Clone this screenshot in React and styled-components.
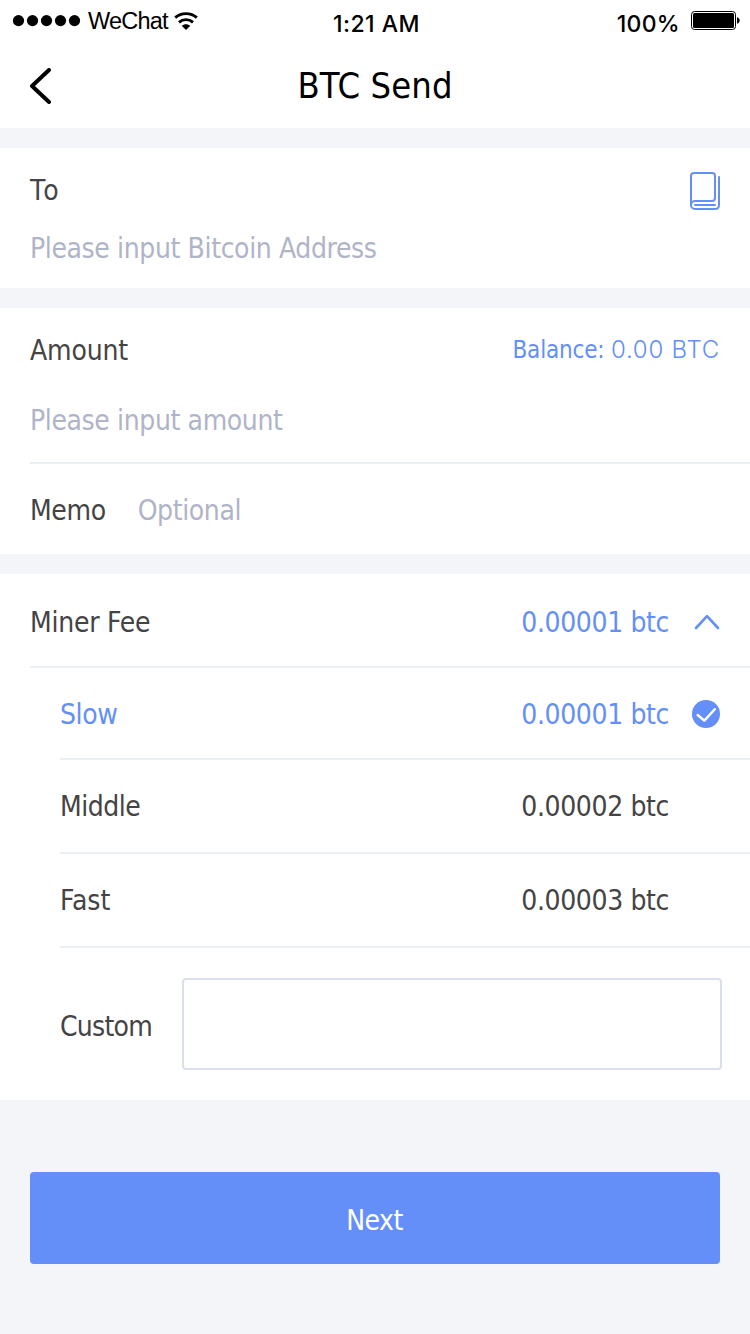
import React from "react";
import styled, { createGlobalStyle } from "styled-components";

const BLUE = "#648ff9";

const GlobalStyle = createGlobalStyle`
  *, *::before, *::after { box-sizing: border-box; }
  body {
    margin: 0;
    background: #f3f5f9;
    color: #444;
    font-family: "DejaVu Sans Condensed", "DejaVu Sans", sans-serif;
    font-stretch: condensed;
    font-size: 28px;
    line-height: 34px;
    letter-spacing: -0.38px;
  }
  svg { display: block; flex: none; }
`;

const Screen = styled.div`
  display: flex;
  flex-direction: column;
  gap: 20px;
  width: 750px;
  height: 1334px;
  overflow: hidden;
`;

const Header = styled.header`
  height: 128px;
  background: #fff;
  color: #000;
`;

const StatusBar = styled.div`
  display: grid;
  grid-template-columns: 1fr auto 1fr;
  height: 40px;
  padding: 0 10px 0 13px;
  font-family: Inter, sans-serif;
  font-size: 23px;
  font-weight: 450;
  line-height: 28px;
`;

const Carrier = styled.div`
  display: flex;
  align-items: center;
  height: 42px;
`;

const CarrierName = styled.span`
  margin: 0 6px 0 7px;
  font-family: "Liberation Sans", sans-serif;
  font-size: 23.5px;
  font-weight: 400;
  letter-spacing: -0.8px;
`;

const Clock = styled.div`
  padding-top: 10px;
  letter-spacing: 0.45px;
`;

const Power = styled.div`
  display: flex;
  justify-content: flex-end;
  gap: 11px;
  padding-top: 10px;
  letter-spacing: 0.3px;
`;

const NavBar = styled.div`
  display: grid;
  grid-template-columns: 60px 1fr 60px;
  align-items: center;
  height: 88px;
  padding: 4px 30px 0;
`;

const Title = styled.h1`
  margin: 0;
  font-size: 36px;
  font-weight: 400;
  line-height: 44px;
  letter-spacing: 0.1px;
  text-align: center;
`;

const Card = styled.section`
  background: #fff;
`;

const AddressCard = styled(Card)`
  height: 140px;
  padding: 24px 29px 0 30px;
`;

const Split = styled.div`
  display: flex;
  justify-content: space-between;
  align-items: flex-start;
`;

const Label = styled.span`
  padding-top: ${(p) => p.$top || 0}px;
  letter-spacing: ${(p) => p.$spacing ?? -0.38}px;
`;

const Placeholder = styled.div`
  margin-top: ${(p) => p.$top || 0}px;
  color: #b0b4c8;
`;

const AmountBlock = styled.div`
  height: 156px;
  margin-left: 30px;
  padding: 26px 30px 0 0;
  border-bottom: 2px solid #ebeff4;
`;

const Balance = styled.div`
  padding-top: 1px;
  color: ${BLUE};
  font-size: 24px;
  line-height: 30px;
  letter-spacing: -0.2px;
  white-space: nowrap;
`;

const BalanceValue = styled.span`
  font-family: Inter, sans-serif;
  font-weight: 300;
  letter-spacing: 0.75px;
`;

const MemoRow = styled.div`
  display: flex;
  align-items: center;
  gap: 32px;
  height: 90px;
  padding: 4px 30px 0;
`;

const FeeRow = styled.div`
  display: flex;
  align-items: center;
  height: ${(p) => p.$height}px;
  margin-left: ${(p) => p.$indent}px;
  padding: ${(p) => p.$top}px 30px 0 0;
  border-bottom: 2px solid #ebeff4;
  color: ${(p) => (p.$active ? BLUE : "#444")};
`;

const FeeValue = styled.span`
  margin-left: auto;
  color: ${(p) => (p.$blue ? BLUE : "inherit")};
`;

const IconSlot = styled.span`
  display: flex;
  justify-content: flex-end;
  width: 51px;
  padding-bottom: 2px;
`;

const CustomRow = styled.div`
  display: grid;
  grid-template-columns: 122px 540px;
  align-items: center;
  height: 152px;
  padding-left: 60px;
`;

const CustomInput = styled.input`
  height: 92px;
  border: 2px solid #dae0e9;
  border-radius: 4px;
  background: #fff;
  outline: none;
`;

const NextButton = styled.button`
  height: 92px;
  margin: 52px 30px 0;
  padding: 6px 1px 0 0;
  border: 0;
  border-radius: 4px;
  background: ${BLUE};
  color: #fff;
  font: inherit;
  letter-spacing: -0.5px;
`;

const Signal = () => (
  <svg width="68" height="12" viewBox="0 0 68 12">
    {[5.5, 19.5, 33.5, 47.5, 61.5].map((x) => (
      <circle key={x} cx={x} cy="5.600" r="5.6" />
    ))}
  </svg>
);

const Wifi = () => (
  <svg width="24" height="18" viewBox="0 0 24 18" fill="none" stroke="#000" strokeWidth="2.9">
    <path d="M1.200 5.700C7.300 .2 16.700 .2 22.800 5.700" />
    <path d="M5 10.300c4-3.600 10-3.600 14 0" />
    <path d="M7.700 13.800c2.500-2.200 6.100-2.200 8.600 0L12 18z" fill="#000" stroke="none" />
  </svg>
);

const Battery = () => (
  <svg width="49" height="20" viewBox="0 0 49 20">
    <rect x=".5" y="1.5" width="44" height="18" rx="3" fill="none" stroke="#000" />
    <rect x="2" y="3" width="41" height="15" rx="1.5" />
    <path d="M46 7.200c3.600 1.200 3.600 5.400 0 6.600z" />
  </svg>
);

const Back = () => (
  <svg width="22" height="36" viewBox="0 0 22 36" fill="none" stroke="#000" strokeWidth="4" strokeLinecap="round" strokeLinejoin="round">
    <path d="M19 2 2 18l17 16" />
  </svg>
);

const Book = () => (
  <svg width="31" height="39" viewBox="0 0 31 39" fill="none" stroke={BLUE} strokeWidth="2" strokeLinecap="round" strokeLinejoin="round">
    <path d="M1 33V4q0-3 3-3h18q3 0 3 3v22q0 3-3 3H5a4 4 0 0 0 0 8h20q4 0 4-4V5" />
    <path d="M5 33h20" />
  </svg>
);

const ChevronUp = () => (
  <svg width="26" height="16" viewBox="0 0 26 16" fill="none" stroke={BLUE} strokeWidth="2.6" strokeLinecap="round" strokeLinejoin="round">
    <path d="M2 14 13 2.2 24 14" />
  </svg>
);

const CheckCircle = () => (
  <svg width="28" height="28" viewBox="0 0 28 28" fill="none">
    <circle cx="14" cy="14" r="14" fill={BLUE} />
    <path d="m5.700 15 6.600 5.600L22.800 9.200" stroke="#fff" strokeWidth="2.4" strokeLinecap="round" strokeLinejoin="round" />
  </svg>
);

const OPTIONS = [
  { name: "Slow", fee: "0.00001 btc", height: 92, top: 3, active: true },
  { name: "Middle", fee: "0.00002 btc", height: 94, top: 1, spacing: -0.5 },
  { name: "Fast", fee: "0.00003 btc", height: 94, top: 1, spacing: 0 },
];

export default function App() {
  return (
    <>
      <GlobalStyle />
      <Screen>
        <Header>
          <StatusBar>
            <Carrier>
              <Signal />
              <CarrierName>WeChat</CarrierName>
              <Wifi />
            </Carrier>
            <Clock>1:21 AM</Clock>
            <Power>
              <span>100%</span>
              <Battery />
            </Power>
          </StatusBar>
          <NavBar>
            <Back />
            <Title>BTC Send</Title>
          </NavBar>
        </Header>
        <AddressCard>
          <Split>
            <Label $top={2} $spacing={2.6}>To</Label>
            <Book />
          </Split>
          <Placeholder $top={21}>Please input Bitcoin Address</Placeholder>
        </AddressCard>
        <Card>
          <AmountBlock>
            <Split>
              <Label $spacing={-0.15}>Amount</Label>
              <Balance>
                Balance: <BalanceValue>0.00 BTC</BalanceValue>
              </Balance>
            </Split>
            <Placeholder $top={36}>Please input amount</Placeholder>
          </AmountBlock>
          <MemoRow>
            <Label>Memo</Label>
            <Placeholder>Optional</Placeholder>
          </MemoRow>
        </Card>
        <Card>
          <FeeRow $height={94} $indent={30} $top={6}>
            <Label $spacing={-0.25}>Miner Fee</Label>
            <FeeValue $blue>0.00001 btc</FeeValue>
            <IconSlot>
              <ChevronUp />
            </IconSlot>
          </FeeRow>
          {OPTIONS.map((o) => (
            <FeeRow key={o.name} $height={o.height} $indent={60} $top={o.top} $active={o.active}>
              <Label $spacing={o.spacing}>{o.name}</Label>
              <FeeValue>{o.fee}</FeeValue>
              <IconSlot>{o.active && <CheckCircle />}</IconSlot>
            </FeeRow>
          ))}
          <CustomRow>
            <Label $top={5} $spacing={-0.75}>Custom</Label>
            <CustomInput aria-label="Custom" />
          </CustomRow>
        </Card>
        <NextButton>Next</NextButton>
      </Screen>
    </>
  );
}
